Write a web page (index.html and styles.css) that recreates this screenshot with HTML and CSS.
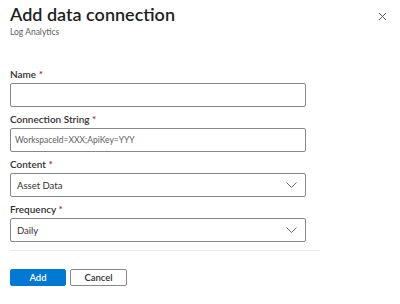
FILE: index.html
```html
<!DOCTYPE html>
<html>
<head>
<meta charset="utf-8">
<link rel="stylesheet" href="styles.css">
</head>
<body>
<div class="panel">
  <div class="header">
    <div class="titles">
      <h1 class="title">Add data connection</h1>
      <div class="subtitle">Log Analytics</div>
    </div>
    <button class="close" aria-label="Close">
      <svg width="9" height="9" viewBox="0 0 9 9"><path d="M1 1L8 8M8 1L1 8" stroke="#605e5c" stroke-width="1" fill="none"/></svg>
    </button>
  </div>
  <form class="form">
    <div class="field">
      <label class="label">Name <span class="req">*</span></label>
      <div class="box"></div>
    </div>
    <div class="field">
      <label class="label">Connection String <span class="req">*</span></label>
      <div class="box"><span class="placeholder">WorkspaceId=XXX;ApiKey=YYY</span></div>
    </div>
    <div class="field">
      <label class="label">Content <span class="req">*</span></label>
      <div class="box select"><span class="value">Asset Data</span>
        <svg class="chev" width="11" height="6" viewBox="0 0 11 6"><path d="M0.5 0.5L5.5 5.5L10.5 0.5" stroke="#605e5c" stroke-width="0.9" fill="none"/></svg>
      </div>
    </div>
    <div class="field">
      <label class="label">Frequency <span class="req">*</span></label>
      <div class="box select"><span class="value">Daily</span>
        <svg class="chev" width="11" height="6" viewBox="0 0 11 6"><path d="M0.5 0.5L5.5 5.5L10.5 0.5" stroke="#605e5c" stroke-width="0.9" fill="none"/></svg>
      </div>
    </div>
  </form>
  <div class="sep"></div>
  <div class="actions">
    <button class="btn primary">Add</button>
    <button class="btn">Cancel</button>
  </div>
</div>
</body>
</html>
```
FILE: styles.css
```css
* { box-sizing: border-box; }
html, body { margin: 0; padding: 0; background: #fff; }
body { font-family: Lato, "Noto Sans", sans-serif; color: #323130; }
.panel { width: 400px; height: 304px; padding: 0 10px; }
.header { display: flex; justify-content: space-between; align-items: flex-start; padding-top: 1px; }
.title { margin: 0; font-size: 18px; line-height: 26px; font-weight: 600; color: #201f1e; }
.subtitle { font-size: 8.5px; line-height: 12px; color: #605e5c; margin-top: -1px; }
.close { border: 0; background: none; padding: 0; margin: 11px 3px 0 0; width: 9px; height: 9px; display: flex; }
.form { margin-top: 24px; width: 296px; }
.field { display: flex; flex-direction: column; }
.label { font-size: 10px; line-height: 16px; font-weight: 600; padding: 4px 0 1px; color: #323130; }
.req { color: #a4262c; }
.box { height: 24px; border: 1px solid #8a8886; border-radius: 2px; display: flex; align-items: center; padding: 0 8px 0 6px; font-size: 9.5px; }
.placeholder { color: #605e5c; font-size: 8.5px; margin-left: -2px; }
.value { color: #323130; flex: 1; }
.sep { width: 310px; height: 1px; background: #edebe9; margin-top: 8px; }
.actions { display: flex; gap: 4px; margin-top: 18px; }
.btn { font-family: inherit; width: 57px; height: 17px; border: 1px solid #8a8886; border-radius: 2px; background: #fff; font-size: 9.5px; line-height: 13px; color: #323130; padding: 0; font-weight: 600; }
.btn.primary { width: 56px; background: #0078d4; border-color: #0078d4; color: #fff; }
```
